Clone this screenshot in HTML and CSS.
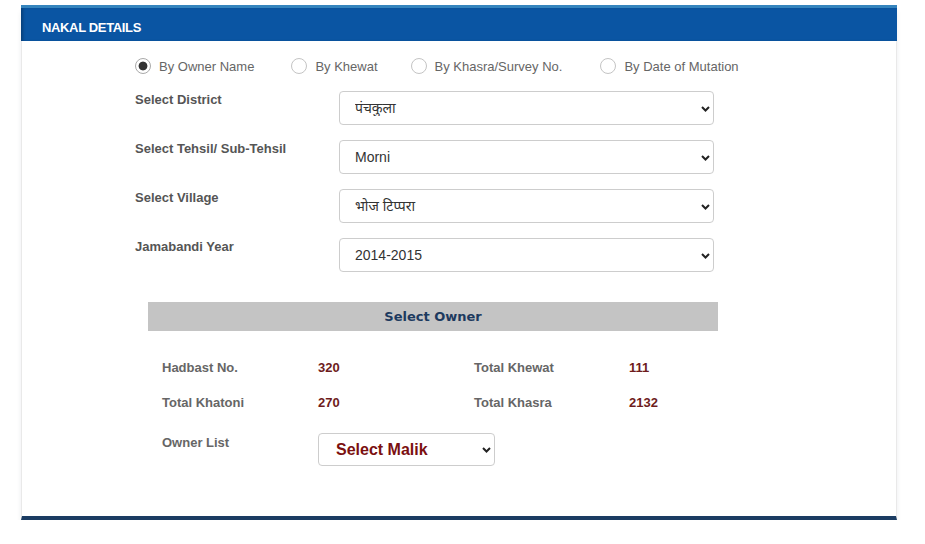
FILE: index.html
```html
<!DOCTYPE html>
<html lang="en">
<head>
<meta charset="utf-8">
<title>Nakal Details</title>
<link rel="stylesheet" href="styles.css">
</head>
<body>
<div class="card">
  <div class="card-head">NAKAL DETAILS</div>
  <div class="card-body">
    <div class="radios">
      <label class="radio"><input type="radio" name="by" checked><span>By Owner Name</span></label>
      <label class="radio radio-2"><input type="radio" name="by"><span>By Khewat</span></label>
      <label class="radio radio-3"><input type="radio" name="by"><span>By Khasra/Survey No.</span></label>
      <label class="radio radio-4"><input type="radio" name="by"><span>By Date of Mutation</span></label>
    </div>

    <div class="form">
      <div class="form-row">
        <div class="form-label">Select District</div>
        <div class="select-wrap">
          <select class="select"><option>पंचकुला</option></select>
          <svg class="chev" width="9" height="6" viewBox="0 0 9 6"><path d="M1 1l3.5 3.5L8 1" fill="none" stroke="#222" stroke-width="2"/></svg>
        </div>
      </div>
      <div class="form-row">
        <div class="form-label">Select Tehsil/ Sub-Tehsil</div>
        <div class="select-wrap">
          <select class="select"><option>Morni</option></select>
          <svg class="chev" width="9" height="6" viewBox="0 0 9 6"><path d="M1 1l3.5 3.5L8 1" fill="none" stroke="#222" stroke-width="2"/></svg>
        </div>
      </div>
      <div class="form-row">
        <div class="form-label">Select Village</div>
        <div class="select-wrap">
          <select class="select"><option>भोज टिप्परा</option></select>
          <svg class="chev" width="9" height="6" viewBox="0 0 9 6"><path d="M1 1l3.5 3.5L8 1" fill="none" stroke="#222" stroke-width="2"/></svg>
        </div>
      </div>
      <div class="form-row">
        <div class="form-label">Jamabandi Year</div>
        <div class="select-wrap">
          <select class="select"><option>2014-2015</option></select>
          <svg class="chev" width="9" height="6" viewBox="0 0 9 6"><path d="M1 1l3.5 3.5L8 1" fill="none" stroke="#222" stroke-width="2"/></svg>
        </div>
      </div>
    </div>

    <div class="owner-bar">Select Owner</div>

    <div class="info">
      <div class="info-label">Hadbast No.</div>
      <div class="info-value">320</div>
      <div class="info-label">Total Khewat</div>
      <div class="info-value">111</div>

      <div class="info-label">Total Khatoni</div>
      <div class="info-value">270</div>
      <div class="info-label">Total Khasra</div>
      <div class="info-value">2132</div>

      <div class="info-label owner-label">Owner List</div>
      <div class="select-wrap owner-wrap">
        <select class="select owner-select"><option>Select Malik</option></select>
        <svg class="chev" width="9" height="6" viewBox="0 0 9 6"><path d="M1 1l3.5 3.5L8 1" fill="none" stroke="#222" stroke-width="2"/></svg>
      </div>
    </div>
  </div>
</div>
</body>
</html>
```

FILE: styles.css
```css
* { box-sizing: border-box; }

body {
  margin: 0;
  background: #fff;
  font-family: "Liberation Sans", Arial, "Noto Sans Devanagari", "Lohit Devanagari", "FreeSans", sans-serif;
  font-size: 13px;
  color: #555;
}

.card {
  width: 876px;
  margin: 5px 0 0 21px;
  box-shadow: 0 5px 6px -2px rgba(30, 50, 80, 0.18);
}

.card-head {
  height: 36px;
  border-top: 3px solid #3584bd;
  background: #0a55a3;
  box-shadow: inset 3px 0 3px -1px rgba(0, 0, 0, 0.25);
  color: #fff;
  font-weight: bold;
  font-size: 13px;
  letter-spacing: -0.35px;
  padding: 6px 0 0 21px;
  display: flex;
  align-items: center;
}

.card-body {
  border-left: 1px solid #e9e9e9;
  border-right: 1px solid #e9e9e9;
  border-bottom: 4px solid #1b3c62;
  padding: 17px 0 50px 113px;
}

.radios {
  display: flex;
  height: 16px;
  align-items: center;
}

.radio {
  display: flex;
  align-items: center;
  gap: 8px;
  color: #666;
  font-size: 13px;
}

.radio-2 { margin-left: 37px; }
.radio-3 { margin-left: 33px; }
.radio-4 { margin-left: 38px; }

.radio input {
  appearance: none;
  margin: 0;
  width: 16px;
  height: 16px;
  border: 1px solid #c4c4c4;
  border-radius: 50%;
  background: #fff;
}

.radio input:checked {
  border-color: #a9a9a9;
  background: radial-gradient(circle, #333 0 4px, #fff 4.8px);
}

.form {
  margin-top: 17px;
  display: flex;
  flex-direction: column;
  gap: 15px;
}

.form-row {
  display: flex;
  align-items: flex-start;
}

.form-label {
  width: 204px;
  line-height: 18px;
  font-weight: bold;
  color: #555;
}

.select-wrap {
  display: grid;
  width: 375px;
  height: 34px;
}

.select-wrap > * {
  grid-area: 1 / 1;
}

.select {
  appearance: none;
  width: 100%;
  height: 100%;
  margin: 0;
  border: 1px solid #cdcdcd;
  border-radius: 4px;
  background: #fff;
  padding: 0 30px 0 15px;
  font-family: "Liberation Sans", Arial, "Noto Sans Devanagari", "Lohit Devanagari", "FreeSans", sans-serif;
  font-size: 14px;
  color: #333;
}

.chev {
  justify-self: end;
  align-self: center;
  margin-right: 4px;
  margin-top: 1px;
  pointer-events: none;
}

.owner-bar {
  margin: 30px 0 0 13px;
  width: 570px;
  height: 29px;
  background: #c4c4c4;
  color: #1d3a5f;
  font-family: "DejaVu Sans", Verdana, sans-serif;
  font-weight: bold;
  font-size: 13px;
  display: flex;
  align-items: center;
  justify-content: center;
}

.info {
  margin: 28px 0 0 27px;
  display: grid;
  grid-template-columns: 156px 156px 155px 80px;
  row-gap: 17px;
  align-items: start;
}

.info-label {
  line-height: 18px;
  font-weight: bold;
  color: #666;
}

.info-value {
  line-height: 18px;
  font-weight: bold;
  color: #6e1c1c;
}

.owner-label {
  margin-top: 5px;
}

.owner-wrap {
  width: 177px;
  height: 33px;
  margin-top: 4px;
  grid-column: 2 / span 2;
}

.owner-select {
  font-weight: bold;
  font-size: 16px;
  color: #7b1010;
  padding-left: 17px;
}
```
